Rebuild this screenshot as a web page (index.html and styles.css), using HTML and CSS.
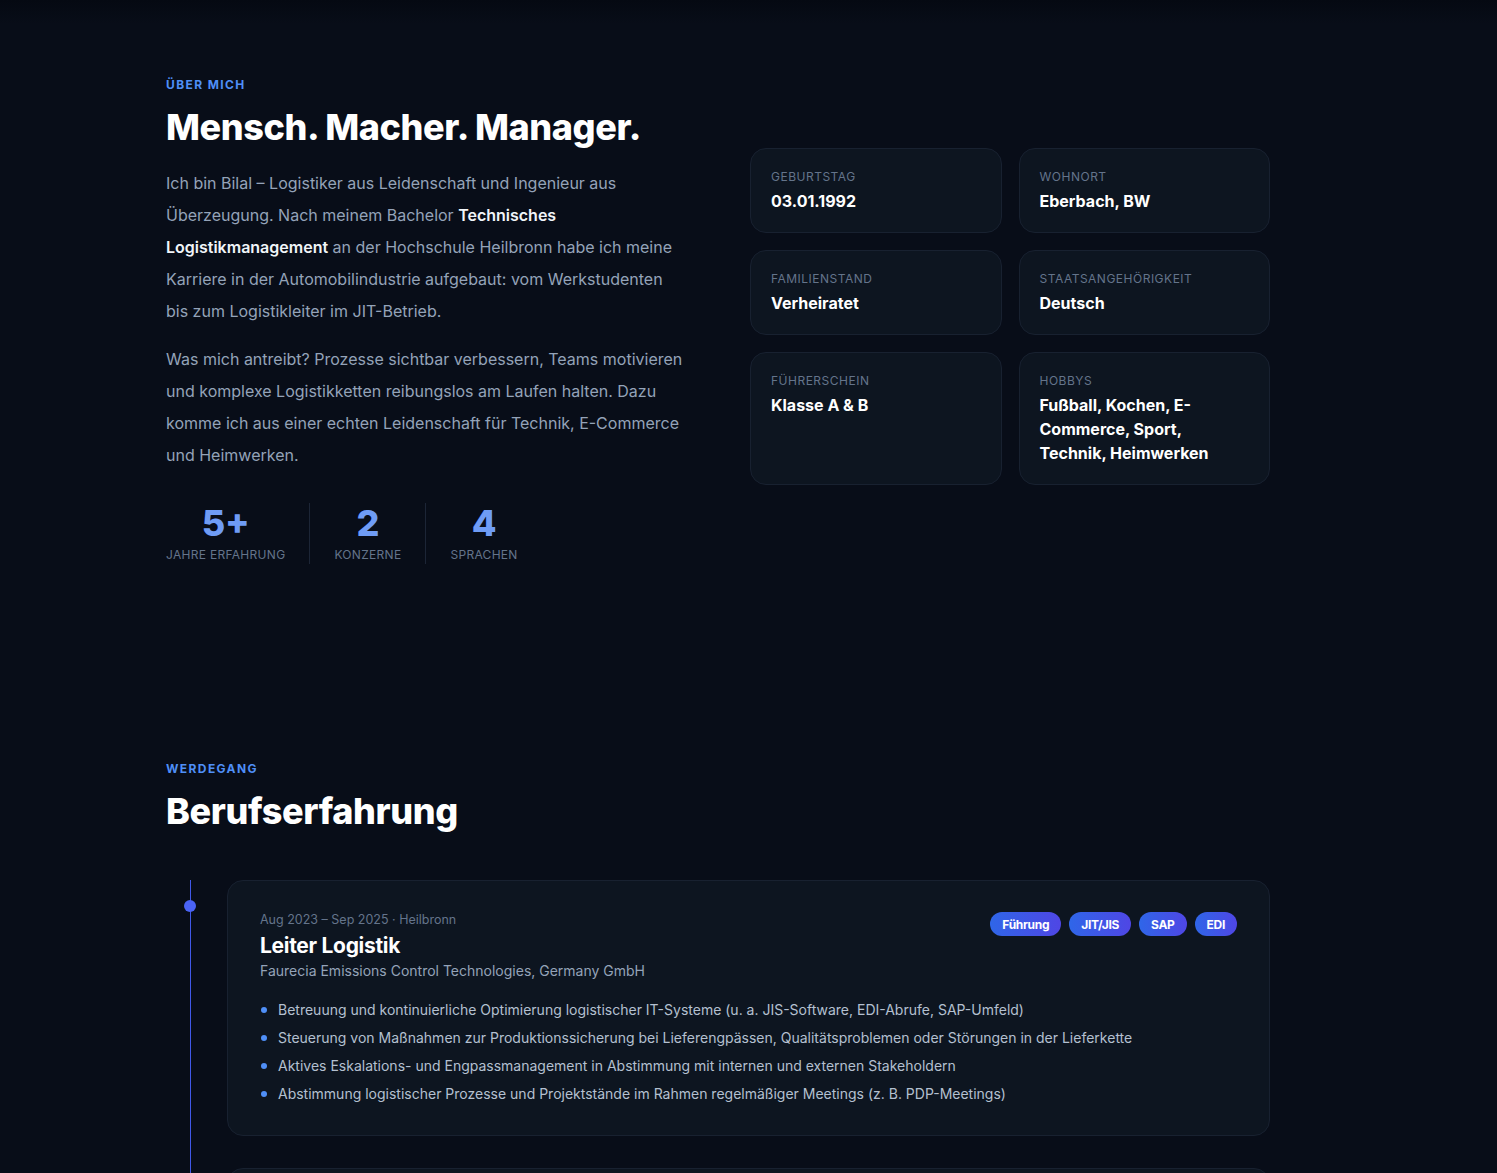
FILE: index.html
```html
<!DOCTYPE html>
<html lang="de">
<head>
<meta charset="utf-8">
<title>Bilal – Über mich</title>
<link rel="stylesheet" href="styles.css">
</head>
<body>
<div class="top-shade"></div>
<main class="page">
  <section class="about">
    <div class="about-text">
      <p class="eyebrow">Über mich</p>
      <h2 class="title">Mensch. Macher. Manager.</h2>
      <p class="lead">Ich bin Bilal – Logistiker aus Leidenschaft und Ingenieur aus Überzeugung. Nach meinem Bachelor <strong>Technisches Logistikmanagement</strong> an der Hochschule Heilbronn habe ich meine Karriere in der Automobilindustrie aufgebaut: vom Werkstudenten bis zum Logistikleiter im JIT-Betrieb.</p>
      <p class="lead">Was mich antreibt? Prozesse sichtbar verbessern, Teams motivieren und komplexe Logistikketten reibungslos am Laufen halten. Dazu komme ich aus einer echten Leidenschaft für Technik, E-Commerce und Heimwerken.</p>
      <div class="stats">
        <div class="stat"><span class="stat-num">5+</span><span class="stat-label">Jahre Erfahrung</span></div>
        <div class="stat"><span class="stat-num">2</span><span class="stat-label">Konzerne</span></div>
        <div class="stat"><span class="stat-num">4</span><span class="stat-label">Sprachen</span></div>
      </div>
    </div>
    <div class="facts">
      <div class="fact"><span class="fact-label">Geburtstag</span><span class="fact-value">03.01.1992</span></div>
      <div class="fact"><span class="fact-label">Wohnort</span><span class="fact-value">Eberbach, BW</span></div>
      <div class="fact"><span class="fact-label">Familienstand</span><span class="fact-value">Verheiratet</span></div>
      <div class="fact"><span class="fact-label">Staatsangehörigkeit</span><span class="fact-value">Deutsch</span></div>
      <div class="fact"><span class="fact-label">Führerschein</span><span class="fact-value">Klasse A &amp; B</span></div>
      <div class="fact"><span class="fact-label">Hobbys</span><span class="fact-value">Fußball, Kochen, E-Commerce, Sport, Technik, Heimwerken</span></div>
    </div>
  </section>

  <section class="career">
    <p class="eyebrow">Werdegang</p>
    <h2 class="title">Berufserfahrung</h2>
    <div class="timeline">
      <article class="job">
        <span class="job-dot"></span>
        <div class="job-head">
          <div>
            <p class="job-meta">Aug 2023 – Sep 2025 · Heilbronn</p>
            <h3 class="job-title">Leiter Logistik</h3>
            <p class="job-company">Faurecia Emissions Control Technologies, Germany GmbH</p>
          </div>
          <div class="tags">
            <span class="tag">Führung</span>
            <span class="tag">JIT/JIS</span>
            <span class="tag">SAP</span>
            <span class="tag">EDI</span>
          </div>
        </div>
        <ul class="job-list">
          <li>Betreuung und kontinuierliche Optimierung logistischer IT-Systeme (u. a. JIS-Software, EDI-Abrufe, SAP-Umfeld)</li>
          <li>Steuerung von Maßnahmen zur Produktionssicherung bei Lieferengpässen, Qualitätsproblemen oder Störungen in der Lieferkette</li>
          <li>Aktives Eskalations- und Engpassmanagement in Abstimmung mit internen und externen Stakeholdern</li>
          <li>Abstimmung logistischer Prozesse und Projektstände im Rahmen regelmäßiger Meetings (z. B. PDP-Meetings)</li>
        </ul>
      </article>
      <article class="job job-next"></article>
    </div>
  </section>
</main>
</body>
</html>
```

FILE: styles.css
```css
* { box-sizing: border-box; }

html, body {
  margin: 0;
  background: #080d18;
  color: #e8edf5;
  font-family: Inter, "Noto Sans", "Liberation Sans", sans-serif;
  -webkit-font-smoothing: antialiased;
}

body { position: relative; overflow: hidden; height: 1173px; }

.top-shade {
  position: absolute;
  left: 0; right: 0; top: 0;
  height: 24px;
  background: linear-gradient(#050912, rgba(8, 13, 24, 0));
  pointer-events: none;
}

.page {
  width: 1104px;
  margin-left: 166px;
  padding-top: 77px;
}

.eyebrow {
  margin: 0;
  color: #4f8ff7;
  font-size: 12px;
  font-weight: 700;
  letter-spacing: 1.4px;
  text-transform: uppercase;
  line-height: 16px;
}

.title {
  margin: 9px 0 0;
  color: #ffffff;
  font-size: 36px;
  font-weight: 800;
  letter-spacing: -0.4px;
  line-height: 50px;
}

/* about section */
.about {
  display: grid;
  grid-template-columns: 518px 520px;
  column-gap: 66px;
  align-items: start;
}

.lead {
  margin: 16px 0 0;
  color: #94a3b8;
  font-size: 16px;
  line-height: 32px;
}
.title + .lead { margin-top: 15px; }
.lead strong { color: #f1f5f9; font-weight: 600; }

.stats {
  display: flex;
  margin-top: 32px;
}
.stat {
  display: flex;
  flex-direction: column;
  align-items: center;
  padding: 0 24px;
  border-left: 1px solid #1c2536;
  height: 61px;
}
.stat:first-child { padding-left: 0; border-left: 0; }
.stat-num {
  color: #6f9cf5;
  font-size: 36px;
  font-weight: 800;
  line-height: 40px;
}
.stat-label {
  margin-top: 4px;
  color: #64748b;
  font-size: 12px;
  letter-spacing: 0.3px;
  text-transform: uppercase;
  line-height: 16px;
}

.facts {
  display: grid;
  grid-template-columns: 1fr 1fr;
  gap: 17px;
  margin-top: 71px;
}
.fact {
  display: flex;
  flex-direction: column;
  background: #0d1520;
  border: 1px solid #182130;
  border-radius: 16px;
  padding: 21px 20px 19px;
  min-height: 85px;
}
.fact-label {
  color: #64748b;
  font-size: 12px;
  letter-spacing: 0.5px;
  text-transform: uppercase;
  line-height: 14px;
}
.fact-value {
  margin-top: 5px;
  color: #ffffff;
  font-size: 16px;
  font-weight: 700;
  line-height: 24px;
}

/* career section */
.career { margin-top: 197px; }

.timeline {
  position: relative;
  margin-top: 44px;
  padding-left: 61px;
}
.timeline::before {
  content: "";
  position: absolute;
  left: 24px;
  top: 0;
  bottom: 0;
  width: 1px;
  background: #4058e8;
}

.job {
  position: relative;
  background: #0d1520;
  border: 1px solid #182130;
  border-radius: 16px;
  padding: 30px 32px 27px;
}
.job-dot {
  position: absolute;
  left: -44px;
  top: 19px;
  width: 12px;
  height: 12px;
  border-radius: 50%;
  background: #4a63f5;
}
.job-next { margin-top: 32px; height: 60px; padding: 0; }

.job-head {
  display: flex;
  justify-content: space-between;
  align-items: flex-start;
}
.job-meta {
  margin: 0;
  color: #64748b;
  font-size: 12.5px;
  line-height: 18px;
}
.job-title {
  margin: 4px 0 0;
  color: #ffffff;
  font-size: 21px;
  font-weight: 700;
  letter-spacing: -0.3px;
  line-height: 26px;
}
.job-company {
  margin: 2px 0 0;
  color: #94a3b8;
  font-size: 14px;
  line-height: 20px;
}

.tags {
  display: flex;
  gap: 8px;
  margin-top: 1px;
}
.tag {
  display: inline-flex;
  align-items: center;
  height: 24px;
  padding: 0 12px;
  border-radius: 999px;
  background: linear-gradient(90deg, #2f66e8, #4f46e5);
  color: #ffffff;
  font-size: 12px;
  font-weight: 700;
  letter-spacing: -0.3px;
}

.job-list {
  list-style: none;
  margin: 15px 0 0;
  padding: 0;
}
.job-list li {
  position: relative;
  padding-left: 18px;
  color: #b4c0d0;
  font-size: 14px;
  line-height: 28px;
}
.job-list li::before {
  content: "";
  position: absolute;
  left: 1px;
  top: 11px;
  width: 6px;
  height: 6px;
  border-radius: 50%;
  background: #4f8ff7;
}
```
